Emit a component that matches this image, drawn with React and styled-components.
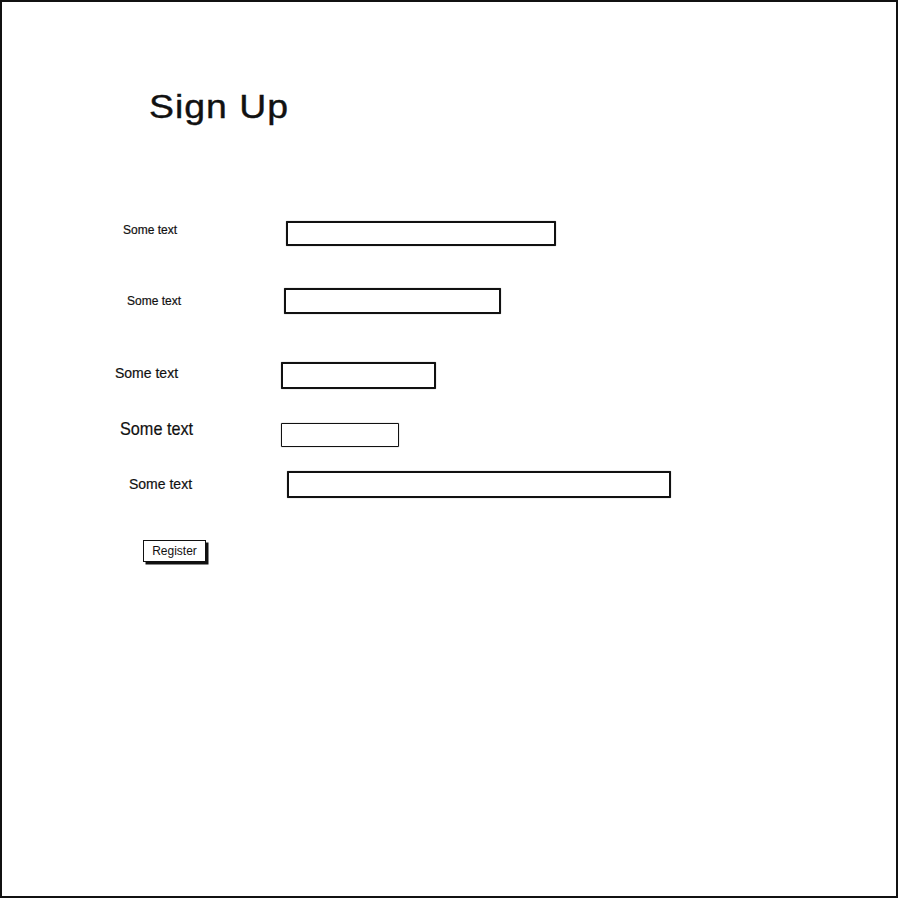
import React from "react";
import styled, { createGlobalStyle } from "styled-components";

const Global = createGlobalStyle`
  html, body { margin: 0; padding: 0; background: #fff; }
  body { font-family: "Liberation Sans", Arial, sans-serif; color: #111; }
`;

const Frame = styled.div`
  box-sizing: border-box;
  width: 898px;
  height: 898px;
  border: 2px solid #111;
  background: #fff;
  display: flex;
  flex-direction: column;
  padding-top: 84px;
`;

const Title = styled.h1`
  align-self: flex-start;
  margin: 0 0 0 147px;
  font-family: "Liberation Sans", Arial, sans-serif;
  font-weight: normal;
  font-size: 34px;
  line-height: 40px;
  height: 40px;
  letter-spacing: 0.9px;
  color: #111;
  transform-origin: left center;
  transform: scaleX(1.1);
  -webkit-text-stroke: 0.4px #111;
`;

const Form = styled.div`
  display: flex;
  flex-direction: column;
  margin-top: 95px;
`;

const Row = styled.div`
  display: flex;
  align-items: center;
  margin-top: ${(p) => p.$gap || 0}px;
  padding-left: ${(p) => p.$labelX - 2}px;
  height: ${(p) => p.$h}px;
`;

const Label = styled.span`
  flex: 0 0 auto;
  width: ${(p) => p.$w}px;
  font-size: ${(p) => p.$size}px;
  line-height: 1.15;
  white-space: nowrap;
  color: #111;
  margin-bottom: ${(p) => p.$lift * 2}px;
  transform-origin: left center;
  transform: scaleX(${(p) => p.$squeeze || 1});
  -webkit-text-stroke: 0.2px #111;
`;

const Field = styled.div`
  box-sizing: border-box;
  flex: 0 0 auto;
  width: ${(p) => p.$w}px;
  height: ${(p) => p.$h}px;
  border: ${(p) => p.$stroke || 2}px solid #111;
  border-radius: 1px;
  background: #fff;
  box-shadow: 0 0 0.8px #222;
`;

const Button = styled.button`
  box-sizing: border-box;
  align-self: flex-start;
  margin: 42px 0 0 141px;
  width: 63px;
  height: 22px;
  padding: 0 0 1px;
  border: 1.5px solid #111;
  background: #fff;
  box-shadow: 2.5px 2.5px 0 #111;
  font-family: "Liberation Sans", Arial, sans-serif;
  font-size: 12px;
  line-height: 18px;
  color: #111;
  cursor: pointer;
`;

const rows = [
  { labelX: 123, inputX: 286, w: 270, h: 25, size: 12, lift: 2.5, gap: 0 },
  { labelX: 127, inputX: 284, w: 217, h: 26, size: 12, lift: -1, gap: 42 },
  { labelX: 115, inputX: 281, w: 155, h: 27, size: 14, lift: 2.5, gap: 48 },
  { labelX: 120, inputX: 281, w: 118, h: 24, size: 19, lift: 6, gap: 34, squeeze: 0.855, stroke: 1.6 },
  { labelX: 129, inputX: 287, w: 384, h: 27, size: 14, lift: 0, gap: 24 },
];

export default function App() {
  return (
    <>
      <Global />
      <Frame>
        <Title>Sign Up</Title>
        <Form>
          {rows.map((r, i) => (
            <Row key={i} $gap={r.gap} $labelX={r.labelX} $h={r.h}>
              <Label $w={r.inputX - r.labelX} $size={r.size} $lift={r.lift} $squeeze={r.squeeze}>
                Some text
              </Label>
              <Field $w={r.w} $h={r.h} $stroke={r.stroke} />
            </Row>
          ))}
        </Form>
        <Button>Register</Button>
      </Frame>
    </>
  );
}
